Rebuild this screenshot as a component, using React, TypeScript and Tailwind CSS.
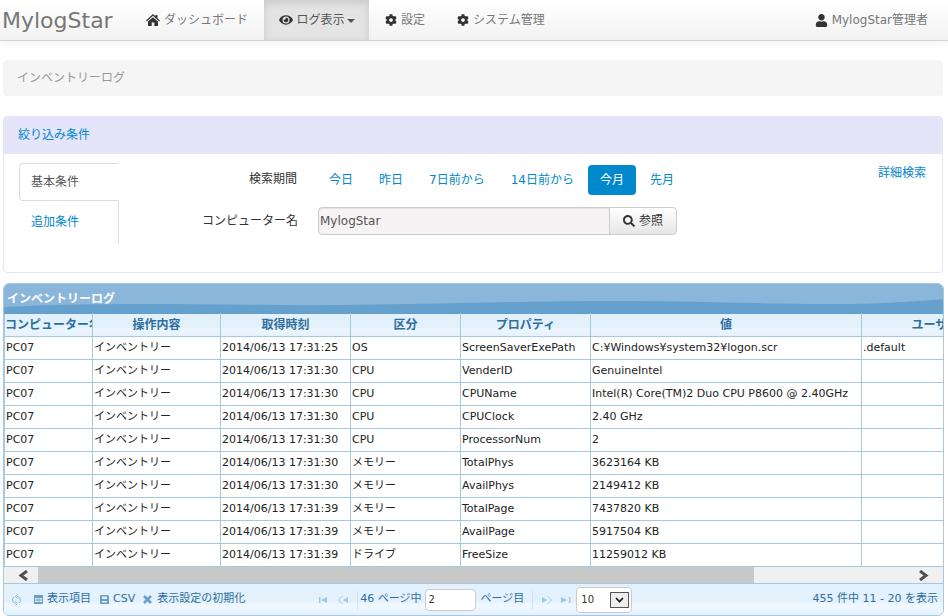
import { ReactNode } from "react";
import { FaCog, FaEye, FaSearch, FaUser } from "react-icons/fa";

const FONT = "font-['DejaVu_Sans','Noto_Sans_CJK_JP',sans-serif]";

const rows = [
  ["2014/06/13 17:31:25", "OS", "ScreenSaverExePath", "C:¥Windows¥system32¥logon.scr", ".default"],
  ["2014/06/13 17:31:30", "CPU", "VenderID", "GenuineIntel", ""],
  ["2014/06/13 17:31:30", "CPU", "CPUName", "Intel(R) Core(TM)2 Duo CPU P8600 @ 2.40GHz", ""],
  ["2014/06/13 17:31:30", "CPU", "CPUClock", "2.40 GHz", ""],
  ["2014/06/13 17:31:30", "CPU", "ProcessorNum", "2", ""],
  ["2014/06/13 17:31:30", "メモリー", "TotalPhys", "3623164 KB", ""],
  ["2014/06/13 17:31:30", "メモリー", "AvailPhys", "2149412 KB", ""],
  ["2014/06/13 17:31:39", "メモリー", "TotalPage", "7437820 KB", ""],
  ["2014/06/13 17:31:39", "メモリー", "AvailPage", "5917504 KB", ""],
  ["2014/06/13 17:31:39", "ドライブ", "FreeSize", "11259012 KB", ""],
];

const heads = [
  ["コンピューター名", "w-[88px]"],
  ["操作内容", "w-[128px]"],
  ["取得時刻", "w-[130px]"],
  ["区分", "w-[110px]"],
  ["プロパティ", "w-[130px]"],
  ["値", "w-[271px]"],
  ["ユーザー名", "w-[160px]"],
];

function NavItem({ icon, label, active }: { icon: ReactNode; label: ReactNode; active?: boolean }) {
  return (
    <a
      className={
        active
          ? "flex h-full w-[105px] items-center justify-center gap-[4px] bg-[#e4e4e4] text-[12px] text-[#555] shadow-[inset_0_3px_8px_rgba(0,0,0,0.12)]"
          : "flex h-full items-center gap-[4px] px-[16px] text-[12px] text-[#777]"
      }
    >
      <span className="text-[#333]">{icon}</span>
      {label}
    </a>
  );
}

function Pill({ label, active }: { label: string; active?: boolean }) {
  return (
    <a
      className={
        active
          ? "flex h-[30px] items-center rounded-[4px] bg-[#0088cc] px-3 text-[12px] text-white"
          : "flex h-[30px] items-center rounded-[4px] px-3 text-[12px] text-[#0088cc]"
      }
    >
      {label}
    </a>
  );
}

function Seek({ d }: { d: string }) {
  return (
    <svg width="10" height="8" viewBox="0 0 10 8" className="fill-[#a3c6e2]">
      <path d={d} />
    </svg>
  );
}

function Sep() {
  return <span className="h-[18px] w-px bg-[#d3dfea]" />;
}

export default function App() {
  return (
    <div className={`h-[616px] w-[948px] overflow-hidden bg-white ${FONT}`}>
      <nav className="flex h-[41px] items-stretch border-b border-[#d4d4d4] bg-gradient-to-b from-white to-[#f2f2f2] shadow-[0_1px_8px_rgba(0,0,0,0.07)]">
        <a className="ml-[2px] mr-[18px] flex w-[110px] items-center text-[22px] text-[#777]">MylogStar</a>
        <NavItem
          icon={
            <svg width="14" height="12" viewBox="0 0 14 12" className="fill-[#333]">
              <path d="M7 0l2.500 2.300V1h2v3.200L14 6.500l-.8.900L7 1.800.8 7.400 0 6.500ZM2 7.600L7 3.200l5 4.400V12H8.300V8.500H5.700V12H2Z" />
            </svg>
          }
          label="ダッシュボード"
        />
        <NavItem
          active
          icon={<FaEye size={14} />}
          label={
            <span className="flex items-center gap-[2px]">
              ログ表示
              <span className="mt-[1px] border-x-[4px] border-t-[4px] border-x-transparent border-t-[#555]" />
            </span>
          }
        />
        <NavItem icon={<FaCog size={12} />} label="設定" />
        <NavItem icon={<FaCog size={12} />} label="システム管理" />
        <div className="ml-auto flex items-center gap-[4px] pr-[20px] text-[12px] text-[#777]">
          <FaUser size={13} className="text-[#333]" />
          MylogStar管理者
        </div>
      </nav>

      <div className="mx-[3px] mt-[19px] flex h-[36px] w-[940px] items-center rounded-[4px] bg-[#f5f5f5] pl-[14px] text-[12px] text-[#999]">
        インベントリーログ
      </div>

      <section className="mx-[3px] mt-[20px] h-[157px] w-[940px] overflow-hidden rounded-[4px] border border-[#e4e5f9]">
        <div className="flex h-[37px] items-center bg-[#e4e5f9] pb-[2px] pl-[14px] text-[12px] text-[#0088cc]">絞り込み条件</div>
        <div className="flex">
          <div className="ml-[15px] mt-[9px] h-[81px] w-[100px] border-r border-[#ddd] text-[12px]">
            <div className="-mr-px flex h-[38px] items-center rounded-l-[4px] border border-r-white border-[#ddd] bg-white pl-[11px] text-[#555]">
              基本条件
            </div>
            <div className="flex h-[42px] items-center pl-[12px] text-[#0088cc]">追加条件</div>
          </div>
          <div className="ml-[78px] mt-[11px] flex flex-col gap-[12px]">
            <div className="flex items-center">
              <span className="w-[100px] -translate-y-px text-right text-[12px] text-[#333]">検索期間</span>
              <div className="ml-[20px] flex gap-[2px]">
                <Pill label="今日" />
                <Pill label="昨日" />
                <Pill label="7日前から" />
                <Pill label="14日前から" />
                <Pill active label="今月" />
                <Pill label="先月" />
              </div>
            </div>
            <div className="flex items-center">
              <span className="w-[101px] text-right text-[12px] text-[#333]">コンピューター名</span>
              <div className="ml-[20px] flex h-[28px]">
                <div className="flex w-[292px] items-center rounded-l-[4px] border border-[#ccc] bg-[#f5f3f4] pl-[1px] text-[12px] text-[#555] shadow-[inset_0_1px_1px_rgba(0,0,0,0.075)]">
                  MylogStar
                </div>
                <button className="-ml-px flex w-[68px] items-center justify-center gap-1 rounded-r-[4px] border border-[#ccc] bg-gradient-to-b from-white to-[#e6e6e6] text-[12px] text-[#333]">
                  <FaSearch size={12} />
                  参照
                </button>
              </div>
            </div>
          </div>
          <a className="ml-auto mr-[16px] mt-[10px] text-[12px] text-[#0088cc]">詳細検索</a>
        </div>
      </section>

      <section className="relative mx-[3px] mt-[10px] w-[941px] overflow-hidden rounded-[6px] border border-[#a6c9e2]">
        <div className="relative flex h-[29px] items-center overflow-hidden bg-[#8ab6da] pl-[3px] text-[12px] font-bold text-white">
          <svg className="absolute inset-0" width="941" height="29" viewBox="0 0 941 29" preserveAspectRatio="none">
            <path d="M0 23C120 17 220 22 340 21S560 15 700 18 860 21 941 15V29H0Z" fill="#66a1ce" />
          </svg>
          <span className="relative">インベントリーログ</span>
        </div>
        <div className="overflow-hidden">
          <table className="w-[1017px] table-fixed border-collapse text-[11px] text-[#222]">
            <thead>
              <tr className="h-[23px] bg-[linear-gradient(#e3f1fd_60%,#eff7fe_60%,#e3f1fd)]">
                {heads.map(([h, w]) => (
                  <th
                    key={h}
                    className={`${w} overflow-hidden whitespace-nowrap border border-[#a6c9e2] border-t-[#5f9fd0] p-0 text-[12px] font-bold text-[#2e6e9e]`}
                  >
                    {h}
                  </th>
                ))}
              </tr>
            </thead>
            <tbody>
              {rows.map((r, i) => (
                <tr key={i} className="h-[23px]">
                  <td className="border border-[#a6c9e2] pl-[1px]">PC07</td>
                  <td className="border border-[#a6c9e2] pl-[1px]">インベントリー</td>
                  {r.map((c, j) => (
                    <td key={j} className="overflow-hidden whitespace-nowrap border border-[#a6c9e2] pl-[1px]">
                      {c}
                    </td>
                  ))}
                </tr>
              ))}
            </tbody>
          </table>
        </div>
        <div className="flex h-[17px] items-center border-b border-[#a6c9e2] bg-[#f0f0f0]">
          <div className="flex w-[34px] justify-center pl-[6px]">
            <svg width="12" height="11" viewBox="0 0 12 11" className="fill-none stroke-[#505050] stroke-[3]">
              <path d="M9 1L3 5.500 9 10" />
            </svg>
          </div>
          <div className="h-full w-[716px] bg-[#c8c8c8]" />
          <div className="ml-auto flex w-[34px] justify-center pr-[6px]">
            <svg width="12" height="11" viewBox="0 0 12 11" className="fill-none stroke-[#505050] stroke-[3]">
              <path d="M3 1l6 4.500L3 10" />
            </svg>
          </div>
        </div>
        <div className="flex h-[31px] items-center bg-[linear-gradient(#e3f1fd_55%,#f1f8fe_70%,#e3f1fd)] text-[11px] text-[#2e6e9e]">
          <svg width="9" height="12" viewBox="0 0 9 12" className="ml-[8px] fill-none stroke-[#8ab4d4]">
            <path d="M2 3a3.600 3.600 0 0 0 2 6.500M7 9a3.600 3.600 0 0 0-2-6.500M5.500 0.500L3.500 2.500 5.500 4.500M3.500 7.500l2 2-2 2" />
          </svg>
          <svg width="9" height="9" viewBox="0 0 9 9" className="ml-[13px] fill-[#6c9fc6]">
            <path d="M0 0h9v9H0ZM1 3v1.500h2V3Zm2.500 0v1.500h2V3ZM6 3v1.500h2V3ZM1 5.500V7h2V5.500Zm2.500 0V7h2V5.500ZM6 5.500V7h2V5.500Z" fillRule="evenodd" />
          </svg>
          <span className="ml-[4px]">表示項目</span>
          <svg width="9" height="9" viewBox="0 0 9 9" className="ml-[9px] fill-[#6c9fc6]">
            <path d="M1 0h7l1 1v8H0V1ZM2 1.500V4h5V1.500ZM2 6v1.500h5V6Z" fillRule="evenodd" />
          </svg>
          <span className="ml-[4px]">CSV</span>
          <svg width="9" height="9" viewBox="0 0 9 9" className="ml-[8px] fill-none stroke-[#6c9fc6] stroke-[2.600]">
            <path d="M1 1l7 7M8 1L1 8" />
          </svg>
          <span className="ml-[5px]">表示設定の初期化</span>
          <div className="ml-[74px] flex items-center gap-[9px]">
            <Seek d="M0 1h1.500v6H0ZM8 1v6L2 4Z" />
            <Seek d="M5 0L1 4l4 4-1 0L0 4l4-4ZM10 1v6L5 4Z" />
            <Sep />
          </div>
          <span className="ml-[2px]">46 ページ中</span>
          <div className="ml-[4px] flex h-[22px] w-[51px] items-center rounded-[4px] border border-[#ccc] bg-white pl-[2px] text-[10px] text-[#333]">
            2
          </div>
          <span className="ml-[4px]">ページ目</span>
          <div className="ml-[8px] flex items-center gap-[9px]">
            <Sep />
            <Seek d="M0 1v6l5-3ZM5 0l4 4-4 4 1 0 4-4-4-4Z" />
            <Seek d="M0 1v6l6-3ZM8 1h1.500v6H8Z" />
          </div>
          <div className="ml-[5px] flex h-[26px] w-[56px] items-center rounded-[4px] border border-[#ccc] bg-white pl-[4px] text-[10px] text-[#333]">
            10
            <span className="ml-auto mr-[2px] flex h-[16px] w-[19px] items-center justify-center border border-[#555] bg-[#eee]">
              <svg width="9" height="6" viewBox="0 0 9 6" className="fill-none stroke-[#111] stroke-[1.600]">
                <path d="M1 1l3.500 3.500L8 1" />
              </svg>
            </span>
          </div>
          <span className="ml-auto mr-[5px]">455 件中 11 - 20 を表示</span>
        </div>
      </section>
    </div>
  );
}
